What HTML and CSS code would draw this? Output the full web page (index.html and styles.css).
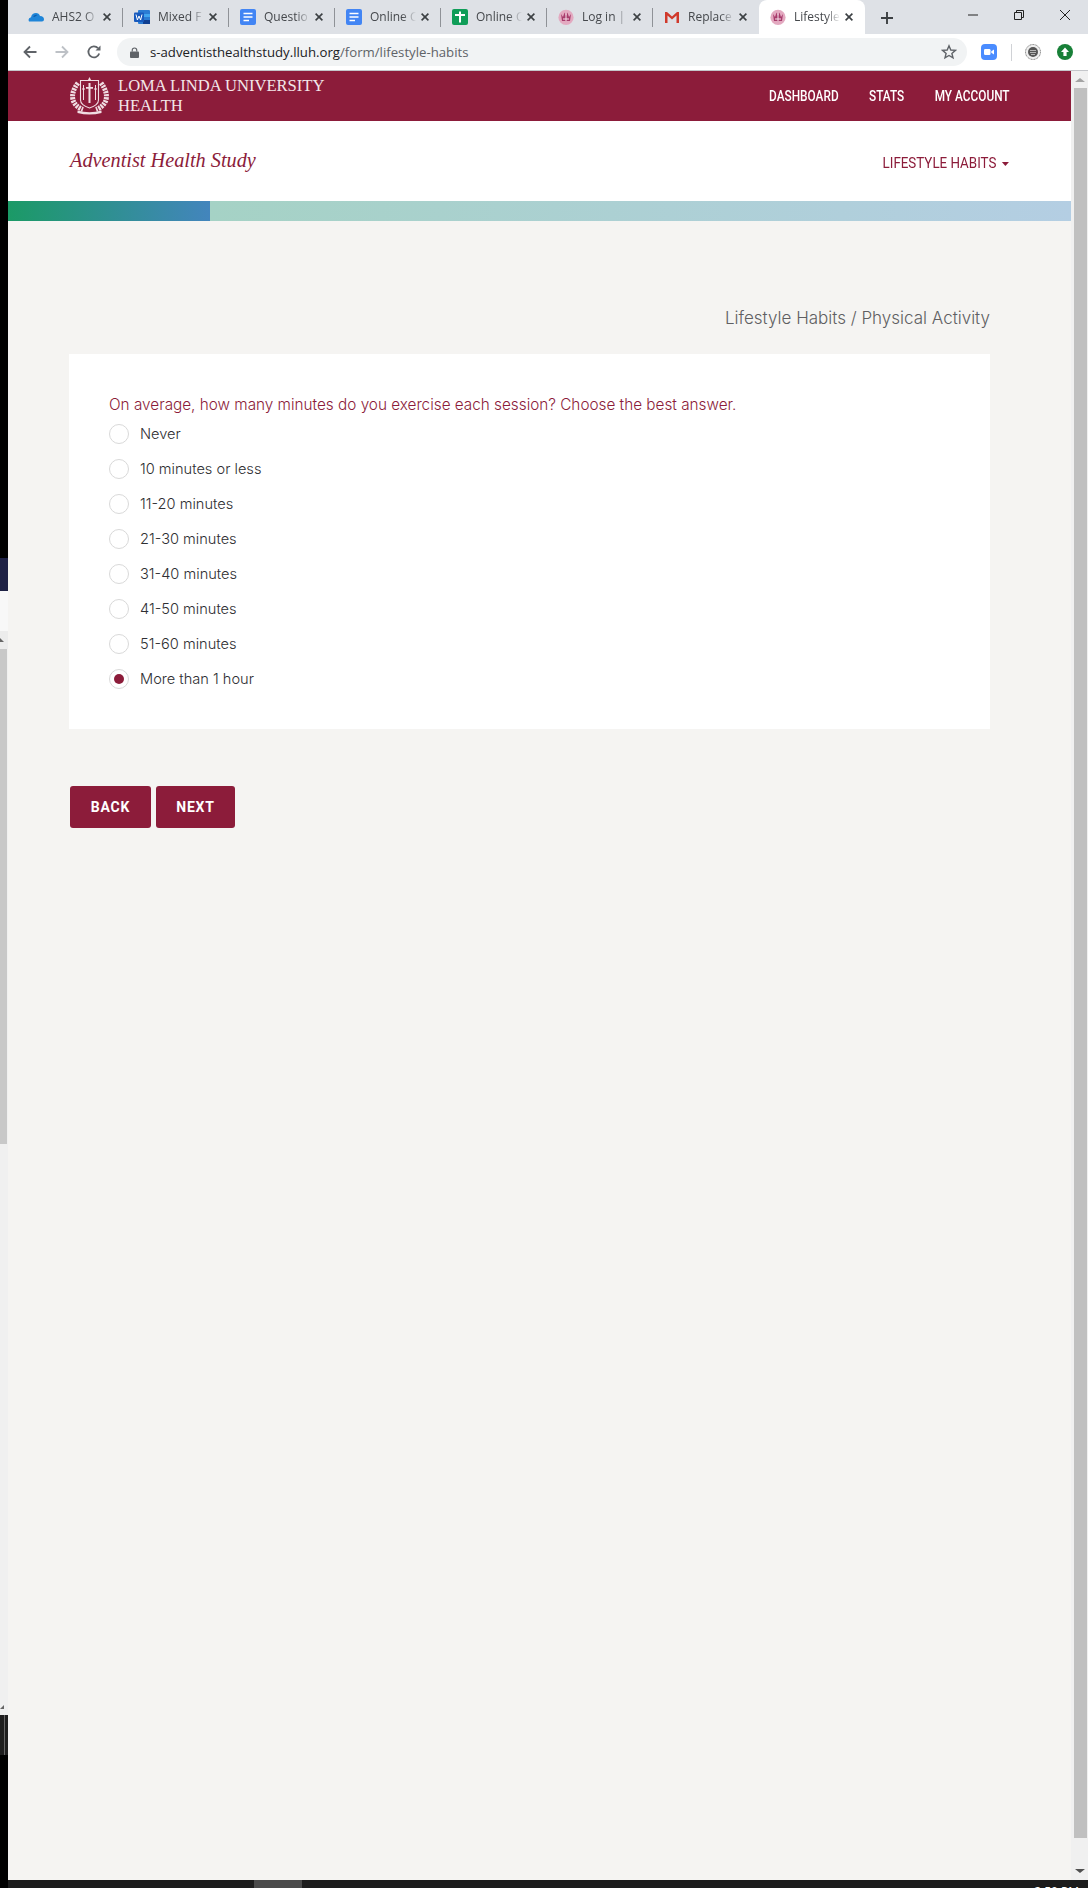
FILE: index.html
```html
<!DOCTYPE html>
<html lang="en">
<head>
    <meta charset="UTF-8">
    <title>Lifestyle Habits</title>
    <link rel="stylesheet" href="styles.css">
</head>
<body>
    <svg width="0" height="0" class="defs">
        <symbol id="crest" viewBox="0 0 40 38">
            <path d="M8.5 6 Q1.5 15 3.5 23 Q6 30 13.5 32.5 M31.5 6 Q38.5 15 36.5 23 Q34 30 26.5 32.5" fill="none" stroke="currentColor" stroke-width="5" stroke-dasharray="2.2 .9"/>
            <path d="M11 3.5 H29 V23 Q29 28 20 31 Q11 28 11 23 Z" fill="#8c1c3a" stroke="currentColor" stroke-width="1.1"/>
            <path d="M20 0 L22 4 L18 4 Z M19 6 H21 V26 H19 Z M16.5 10 H23.5 V11.8 H16.5 Z" fill="currentColor"/>
            <path d="M14 8 V23 M26 8 V23 M12.5 12 H15.5 M24.5 12 H27.5" stroke="currentColor" stroke-width="1"/>
            <path d="M8 33.5 Q20 37 32 33.5 L32 36 Q20 39 8 36 Z" fill="currentColor"/>
        </symbol>
        <symbol id="tabcrest" viewBox="0 0 16 16">
            <circle cx="8" cy="8.4" r="7.6" fill="#e3a9c0"/>
            <path d="M3 5 L5 8 L6.5 3.5 L8 7 L9.5 3.5 L11 8 L13 5 L12 12 H4 Z" fill="#a83c6c"/>
            <path d="M5 10 H11 M8 5 V12" stroke="#f6dfe9" stroke-width="1"/>
        </symbol>
        <symbol id="close" viewBox="0 0 8 8">
            <path d="M.6 .6 L7.4 7.4 M7.4 .6 L.6 7.4" stroke="#3c4043" stroke-width="1.6"/>
        </symbol>
    </svg>

    <div class="edge">
        <div class="edge-black"></div>
        <div class="edge-navy"></div>
        <div class="edge-light"></div>
        <div class="edge-arrow"><span class="notch"></span></div>
        <div class="edge-thumb"></div>
        <div class="edge-track"><span class="notch"></span></div>
        <div class="edge-dark"></div>
        <div class="edge-rest"></div>
    </div>

    <div class="window">
        <div class="tabs">
            <div class="tab">
                <svg class="favicon" viewBox="0 0 16 16"><path d="M1 12.5 Q-.5 9 3 8.2 Q4 4 8 4 Q11 4 12 7 Q16 7 16 10.5 Q16 12.5 14 12.5 Z" fill="#1f85d8"/><path d="M5 7.5 Q7 5 9.5 6 L6.5 8 Z" fill="#0f5fae"/></svg>
                <span class="tab-title">AHS2 O</span>
                <svg class="tab-close"><use href="#close"/></svg>
            </div>
            <div class="tab">
                <svg class="favicon" viewBox="0 0 16 16"><rect x="4" y="1" width="12" height="14" rx="1" fill="#2b7cd3"/><rect x="9" y="5" width="7" height="3" fill="#41a5ee"/><rect x="9" y="11" width="7" height="4" fill="#103f91"/><rect y="3.5" width="10" height="9.5" rx="1" fill="#185abd"/><path d="M2 5.5 L3.4 11 L5 7 L6.6 11 L8 5.5" fill="none" stroke="#fff" stroke-width="1"/></svg>
                <span class="tab-title">Mixed F</span>
                <svg class="tab-close"><use href="#close"/></svg>
            </div>
            <div class="tab">
                <svg class="favicon" viewBox="0 0 16 16"><rect width="16" height="16" rx="2" fill="#4285f4"/><path d="M3.5 4.5 H12.5 M3.5 8 H12.5 M3.5 11.5 H9" stroke="#fff" stroke-width="1.5"/></svg>
                <span class="tab-title">Questio</span>
                <svg class="tab-close"><use href="#close"/></svg>
            </div>
            <div class="tab">
                <svg class="favicon" viewBox="0 0 16 16"><rect width="16" height="16" rx="2" fill="#4285f4"/><path d="M3.5 4.5 H12.5 M3.5 8 H12.5 M3.5 11.5 H9" stroke="#fff" stroke-width="1.5"/></svg>
                <span class="tab-title">Online C</span>
                <svg class="tab-close"><use href="#close"/></svg>
            </div>
            <div class="tab">
                <svg class="favicon" viewBox="0 0 16 16"><rect width="16" height="16" rx="2" fill="#0f9d58"/><path d="M8 2.5 V13.5 M3 6 H13" stroke="#fff" stroke-width="2"/></svg>
                <span class="tab-title">Online C</span>
                <svg class="tab-close"><use href="#close"/></svg>
            </div>
            <div class="tab">
                <svg class="favicon"><use href="#tabcrest"/></svg>
                <span class="tab-title">Log in |</span>
                <svg class="tab-close"><use href="#close"/></svg>
            </div>
            <div class="tab">
                <svg class="favicon" viewBox="0 0 16 16"><path d="M1 14 V3 H3 L8 7.5 L13 3 H15 V14 H12.5 V6.5 L8 10.5 L3.5 6.5 V14 Z" fill="#d0392b"/></svg>
                <span class="tab-title">Replace</span>
                <svg class="tab-close"><use href="#close"/></svg>
            </div>
            <div class="tab tab-active">
                <svg class="favicon"><use href="#tabcrest"/></svg>
                <span class="tab-title">Lifestyle</span>
                <svg class="tab-close"><use href="#close"/></svg>
            </div>
            <svg class="new-tab" viewBox="0 0 12 12"><path d="M6 0 V12 M0 6 H12" stroke="#3c4043" stroke-width="1.9"/></svg>
            <div class="win-controls">
                <svg viewBox="0 0 12 12"><path d="M1 6 H11" stroke="#222" stroke-width="1"/></svg>
                <svg viewBox="0 0 12 12"><path d="M1.5 3.5 H8.5 V10.5 H1.5 Z M3.5 3.5 V1.5 H10.5 V8.5 H8.5" fill="none" stroke="#222" stroke-width="1"/></svg>
                <svg viewBox="0 0 12 12"><path d="M1 1 L11 11 M11 1 L1 11" stroke="#222" stroke-width="1"/></svg>
            </div>
        </div>

        <div class="toolbar">
            <svg class="tool" viewBox="0 0 16 16"><path d="M14.5 8 H2.5 M8 2.5 L2.5 8 L8 13.5" fill="none" stroke="#5f6368" stroke-width="1.8"/></svg>
            <svg class="tool" viewBox="0 0 16 16"><path d="M1.5 8 H13.5 M8 2.5 L13.5 8 L8 13.5" fill="none" stroke="#bdc1c6" stroke-width="1.8"/></svg>
            <svg class="tool" viewBox="0 0 16 16"><path d="M13.2 9.5 A5.5 5.5 0 1 1 12 4.2" fill="none" stroke="#5f6368" stroke-width="1.8"/><path d="M9.5 6.5 H14.5 V1.5 Z" fill="#5f6368"/></svg>
            <div class="address">
                <svg class="lock" viewBox="0 0 10 12"><path d="M2.5 5 V3.5 A2.5 2.5 0 0 1 7.5 3.5 V5" fill="none" stroke="#5f6368" stroke-width="1.3"/><rect y="5" width="10" height="7" rx="1" fill="#5f6368"/></svg>
                <span class="url">s-adventisthealthstudy.lluh.org<span class="url-path">/form/lifestyle-habits</span></span>
                <svg class="star" viewBox="0 0 16 16"><path d="M8 1.8 L9.8 6 L14.4 6.4 L10.9 9.4 L12 13.9 L8 11.5 L4 13.9 L5.1 9.4 L1.6 6.4 L6.2 6 Z" fill="none" stroke="#5f6368" stroke-width="1.4"/></svg>
            </div>
            <svg class="ext-zoom" viewBox="0 0 16 16"><rect width="16" height="16" rx="4" fill="#4a8cff"/><rect x="3" y="5" width="6.5" height="6" rx="1.2" fill="#fff"/><path d="M10.3 7.3 L13 5.5 V10.5 L10.3 8.7 Z" fill="#fff"/></svg>
            <span class="tool-sep"></span>
            <svg class="ext-seal" viewBox="0 0 16 16"><circle cx="8" cy="8" r="7.5" fill="#eee" stroke="#777" stroke-dasharray="1 .6"/><circle cx="8" cy="8" r="5" fill="#555"/><path d="M5 6.5 H11 M5 8.5 H11 M6 10.5 H10" stroke="#ccc" stroke-width=".8"/></svg>
            <svg class="ext-up" viewBox="0 0 16 16"><circle cx="8" cy="8" r="8" fill="#188038"/><path d="M8 3.5 L12 8 H9.6 V12 H6.4 V8 H4 Z" fill="#fff"/></svg>
        </div>

        <div class="viewport">
            <div class="page">
                <header class="site-header">
                    <div class="brand">
                        <svg class="crest"><use href="#crest"/></svg>
                        <div class="brand-name">Loma Linda University<br>Health</div>
                    </div>
                    <nav class="site-nav">
                        <a>DASHBOARD</a>
                        <a>STATS</a>
                        <a>MY ACCOUNT</a>
                    </nav>
                </header>

                <div class="sub-header">
                    <div class="study-name">Adventist Health Study</div>
                    <div class="section-menu">LIFESTYLE HABITS <span class="caret"></span></div>
                </div>

                <div class="progress">
                    <div class="progress-done"></div>
                    <div class="progress-left"></div>
                </div>

                <main class="content">
                    <div class="breadcrumb">Lifestyle Habits / Physical Activity</div>
                    <div class="card">
                        <div class="question">On average, how many minutes do you exercise each session? Choose the best answer.</div>
                        <div class="option"><span class="radio"></span>Never</div>
                        <div class="option"><span class="radio"></span>10 minutes or less</div>
                        <div class="option"><span class="radio"></span>11-20 minutes</div>
                        <div class="option"><span class="radio"></span>21-30 minutes</div>
                        <div class="option"><span class="radio"></span>31-40 minutes</div>
                        <div class="option"><span class="radio"></span>41-50 minutes</div>
                        <div class="option"><span class="radio"></span>51-60 minutes</div>
                        <div class="option"><span class="radio checked"></span>More than 1 hour</div>
                    </div>
                    <div class="actions">
                        <button class="btn btn-back">BACK</button>
                        <button class="btn btn-next">NEXT</button>
                    </div>
                </main>
            </div>

            <div class="scrollbar">
                <span class="arrow-up"></span>
                <div class="thumb"></div>
                <span class="arrow-down"></span>
            </div>
        </div>

        <div class="taskbar">
            <span class="task-active"></span>
            <span class="clock">2:50 PM</span>
        </div>
    </div>
</body>
</html>
```

FILE: styles.css
```css
html, body {
    margin: 0;
    height: 100%;
}
body {
    display: flex;
    width: 1088px;
    height: 1888px;
    overflow: hidden;
    font-family: Inter, Arial, sans-serif;
    background: #000;
}
.defs {
    position: absolute;
}

/* sliver of the window behind, on the left */
.edge {
    width: 8px;
    flex: none;
    display: flex;
    flex-direction: column;
}
.edge-black {
    height: 558px;
    background: #000;
}
.edge-navy {
    height: 33px;
    background: #1e2145;
}
.edge-light {
    height: 40px;
    background: #f8f8f8;
}
.edge-arrow {
    height: 18px;
    background: #ececec;
    display: flex;
    align-items: center;
}
.edge-thumb {
    height: 495px;
    box-sizing: border-box;
    border-right: 1px solid #f0f0f0;
    background: #c8c8c8;
}
.edge-track {
    height: 571px;
    background: #f0f0f0;
    display: flex;
    align-items: flex-end;
}
.notch {
    width: 4px;
    height: 4px;
    margin-bottom: 6px;
    background: #666;
    clip-path: polygon(100% 0, 100% 100%, 0 100%);
}
.edge-arrow .notch {
    margin-bottom: 0;
    clip-path: polygon(0 0, 100% 100%, 0 100%);
}
.edge-dark {
    height: 40px;
    background: #1e1e1e;
    border-left: 3px solid #1e1e1e;
    box-sizing: border-box;
}
.edge-dark::after {
    content: "";
    display: block;
    width: 1px;
    height: 100%;
    margin-left: 1px;
    background: #666;
}
.edge-rest {
    flex: 1;
    background: #000;
}

.window {
    flex: 1;
    min-width: 0;
    display: flex;
    flex-direction: column;
    background: #fff;
}

/* browser tabs */
.tabs {
    height: 34px;
    flex: none;
    display: flex;
    align-items: stretch;
    padding-left: 9px;
    background: #dee1e6;
}
.tab {
    width: 106px;
    flex: none;
    box-sizing: border-box;
    display: flex;
    align-items: center;
    padding-left: 11px;
    padding-bottom: 1px;
    position: relative;
    font-family: "Open Sans", Arial, sans-serif;
    font-size: 12px;
    color: #45484c;
}
.tab::after {
    content: "";
    position: absolute;
    right: 0;
    top: 8px;
    height: 19px;
    width: 1px;
    background: #8f9297;
}
.tab:nth-child(7)::after,
.tab-active::after {
    display: none;
}
.tab-active {
    background: #fff;
    border-radius: 8px 8px 0 0;
}
.favicon {
    width: 16px;
    height: 16px;
    flex: none;
}
.tab-title {
    width: 46px;
    margin-left: 8px;
    white-space: nowrap;
    -webkit-mask-image: linear-gradient(to right, #000 70%, transparent);
    mask-image: linear-gradient(to right, #000 70%, transparent);
}
.tab-close {
    width: 8px;
    height: 8px;
    margin-left: 5px;
    flex: none;
}
.new-tab {
    width: 12px;
    height: 12px;
    margin: 12px 0 0 16px;
    flex: none;
}
.win-controls {
    display: flex;
    gap: 34px;
    margin-left: 74px;
    margin-top: 9px;
}
.win-controls svg {
    width: 12px;
    height: 12px;
}

/* address bar row */
.toolbar {
    height: 36px;
    flex: none;
    display: flex;
    align-items: center;
    padding-left: 14px;
    border-bottom: 1px solid #c4c6ca;
    background: #fff;
}
.tool {
    width: 16px;
    height: 16px;
    margin-right: 16px;
    flex: none;
}
.address {
    width: 850px;
    height: 28px;
    margin-left: -1px;
    flex: none;
    display: flex;
    align-items: center;
    box-sizing: border-box;
    padding: 0 10px 0 13px;
    border-radius: 14px;
    background: #f1f3f4;
}
.lock {
    width: 9px;
    height: 11px;
    flex: none;
}
.url {
    margin-left: 11px;
    font-family: "Open Sans", Arial, sans-serif;
    font-size: 13.2px;
    color: #202124;
    white-space: nowrap;
}
.url-path {
    color: #5f6368;
}
.star {
    width: 16px;
    height: 16px;
    margin-left: auto;
}
.ext-zoom {
    width: 16px;
    height: 16px;
    margin-left: 14px;
    flex: none;
}
.tool-sep {
    width: 1px;
    height: 17px;
    margin-left: 14px;
    background: #d0d2d6;
}
.ext-seal {
    width: 16px;
    height: 16px;
    margin-left: 13px;
    flex: none;
}
.ext-up {
    width: 16px;
    height: 16px;
    margin-left: 16px;
    flex: none;
}

.viewport {
    flex: 1;
    min-height: 0;
    display: flex;
}
.page {
    width: 1063px;
    flex: none;
    background: #f5f4f2;
}

/* site header */
.site-header {
    height: 50px;
    display: flex;
    align-items: center;
    justify-content: space-between;
    padding: 0 61px;
    background: #8c1c3a;
}
.brand {
    display: flex;
    align-items: center;
    gap: 8px;
    color: #f3e6e9;
}
.crest {
    width: 41px;
    height: 38px;
    flex: none;
    color: #f0dde2;
}
.brand-name {
    margin-top: -1px;
    font-family: "Liberation Serif", serif;
    font-size: 16.6px;
    line-height: 20px;
    text-transform: uppercase;
}
/* no condensed face installed, so squeeze from the right edge */
.site-nav {
    display: flex;
    gap: 36px;
    transform: scaleX(.845);
    transform-origin: right center;
    font-family: Roboto, Arial, sans-serif;
    font-size: 14px;
    font-weight: 500;
    color: #fff;
}

.sub-header {
    height: 80px;
    display: flex;
    justify-content: space-between;
    align-items: center;
    padding: 0 62px;
    background: #fff;
}
.study-name {
    margin-bottom: 2px;
    font-family: "Liberation Serif", serif;
    font-style: italic;
    font-size: 20.3px;
    color: #8c1c3a;
}
.section-menu {
    margin-top: 4px;
    transform: scaleX(.89);
    transform-origin: right center;
    font-family: Roboto, Arial, sans-serif;
    font-size: 15px;
    color: #8c1c3a;
}
.caret {
    display: inline-block;
    margin-left: 2px;
    vertical-align: middle;
    border-top: 4px solid #8c1c3a;
    border-left: 4px solid transparent;
    border-right: 4px solid transparent;
}

.progress {
    height: 20px;
    display: flex;
}
.progress-done {
    width: 202px;
    background: linear-gradient(to right, #1b9a66, #4385bd);
}
.progress-left {
    flex: 1;
    background: linear-gradient(to right, #a5d2c5, #b4cee3);
}

.content {
    padding: 85px 81px 0 61px;
}
.breadcrumb {
    height: 24px;
    margin-bottom: 24px;
    line-height: 24px;
    text-align: right;
    font-weight: 300;
    font-size: 17px;
    color: #5f5f62;
}
.card {
    padding: 40px 40px 33px;
    background: #fff;
}
.question {
    line-height: 22px;
    font-size: 15.3px;
    font-weight: 300;
    color: #8c1c3a;
}
.option {
    height: 35px;
    display: flex;
    align-items: center;
    gap: 11px;
    font-size: 14.6px;
    font-weight: 300;
    color: #2f2f33;
}
.radio {
    width: 20px;
    height: 20px;
    flex: none;
    box-sizing: border-box;
    border: 1px solid #d9d9d9;
    border-radius: 50%;
    display: flex;
    align-items: center;
    justify-content: center;
}
.radio.checked::before {
    content: "";
    width: 10px;
    height: 10px;
    border-radius: 50%;
    background: #8c1c3a;
}

.actions {
    display: flex;
    gap: 5px;
    margin: 57px 0 0 1px;
}
.btn {
    height: 42px;
    padding: 0;
    border: none;
    border-radius: 3px;
    background: #8c1c3a;
    color: #fff;
    font-family: Roboto, Arial, sans-serif;
    font-size: 14px;
    font-weight: 700;
    letter-spacing: .8px;
}
.btn-back {
    width: 81px;
}
.btn-next {
    width: 79px;
}

/* page scrollbar */
.scrollbar {
    flex: 1;
    background: #f0f0f0;
    display: flex;
    flex-direction: column;
    align-items: center;
}
.arrow-up {
    margin-top: 7px;
    border-bottom: 4px solid #a3a3a3;
    border-left: 5px solid transparent;
    border-right: 5px solid transparent;
}
.thumb {
    width: 13px;
    height: 1750px;
    margin-top: 6px;
    margin-left: 1px;
    background: #c0c0c0;
}
.arrow-down {
    margin-top: 31px;
    border-top: 4px solid #505050;
    border-left: 5px solid transparent;
    border-right: 5px solid transparent;
}

.taskbar {
    height: 8px;
    flex: none;
    overflow: hidden;
    display: flex;
    padding-left: 246px;
    background: #1c1c1c;
}
.task-active {
    width: 48px;
    height: 8px;
    background: #4a4a4a;
}
.clock {
    margin-left: auto;
    margin-right: 9px;
    margin-top: 5px;
    font-family: "Open Sans", Arial, sans-serif;
    font-size: 12px;
    line-height: 14px;
    color: #fff;
}
```
